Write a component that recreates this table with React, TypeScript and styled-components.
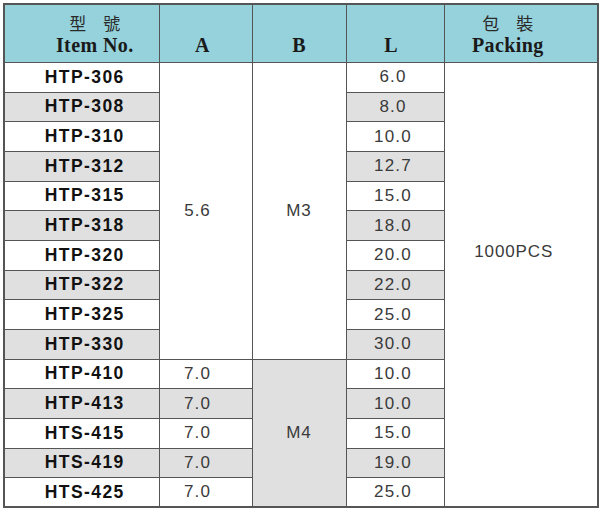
import React from "react";
import styled, { createGlobalStyle } from "styled-components";

const Global = createGlobalStyle`
  html, body { margin: 0; padding: 0; background: #ffffff; }
  body { width: 600px; height: 511px; overflow: hidden; }
`;

const Page = styled.div`
  padding: 3px 0 0 3px;
`;

const Table = styled.table`
  border-collapse: collapse;
  table-layout: fixed;
  width: 594px;
  border: 2px solid #555;
`;

const HeadCell = styled.th<{ $dx?: number }>`
  background: #95d2dc;
  height: 51px;
  padding: 0 ${(p) => (p.$dx && p.$dx < 0 ? -p.$dx * 2 : 0)}px 6px
    ${(p) => (p.$dx && p.$dx > 0 ? p.$dx * 2 : 0)}px;
  border: 1px solid #555;
  vertical-align: bottom;
  text-align: center;
  color: #1a1a1a;
`;

const Cjk = styled.div`
  font-family: "Noto Sans CJK TC", "Noto Sans CJK SC", sans-serif;
  font-size: 17px;
  font-weight: 400;
  line-height: 23px;
  color: #2a2a2a;
`;

const Latin = styled.div`
  font-family: "Liberation Serif", "Times New Roman", serif;
  font-size: 20px;
  font-weight: 700;
  line-height: 22px;
  letter-spacing: 0.4px;
`;

const Row = styled.tr`
  height: 29.67px;
`;

const ItemCell = styled.td<{ $shade?: boolean }>`
  background: ${(p) => (p.$shade ? "#e0e0e0" : "#ffffff")};
  border: 1px solid #555;
  border-top-color: ${(p) => (p.$shade ? "#9a9a9a" : "#555")};
  padding: 0 0 0 6px;
  text-align: center;
  font-family: "Liberation Sans", Arial, sans-serif;
  font-weight: 700;
  font-size: 17.5px;
  letter-spacing: 1.4px;
  color: #111;
`;

const ValueCell = styled.td<{ $shade?: boolean; $shift?: number }>`
  background: ${(p) => (p.$shade ? "#e0e0e0" : "#ffffff")};
  border: 1px solid #555;
  border-top-color: ${(p) => (p.$shade ? "#9a9a9a" : "#555")};
  padding: 0 ${(p) => (p.$shift ? p.$shift * 2 : 0)}px 0 0;
  text-align: center;
  font-family: "Liberation Sans", Arial, sans-serif;
  font-weight: 400;
  font-size: 17px;
  letter-spacing: 1.2px;
  color: #3a3a3a;
`;

const SpanCell = styled.td<{ $shade?: boolean; $lift?: number; $shift?: number }>`
  background: ${(p) => (p.$shade ? "#e0e0e0" : "#ffffff")};
  border: 1px solid #555;
  padding: 0 ${(p) => (p.$shift ? p.$shift * 2 : 0)}px ${(p) => (p.$lift ? p.$lift * 2 : 0)}px 0;
  text-align: center;
  vertical-align: middle;
  font-family: "Liberation Sans", Arial, sans-serif;
  font-weight: 400;
  font-size: 17px;
  letter-spacing: 0.9px;
  color: #3a3a3a;
`;

type R = { item: string; a?: string; l: string };

const rows: R[] = [
  { item: "HTP-306", l: "6.0" },
  { item: "HTP-308", l: "8.0" },
  { item: "HTP-310", l: "10.0" },
  { item: "HTP-312", l: "12.7" },
  { item: "HTP-315", l: "15.0" },
  { item: "HTP-318", l: "18.0" },
  { item: "HTP-320", l: "20.0" },
  { item: "HTP-322", l: "22.0" },
  { item: "HTP-325", l: "25.0" },
  { item: "HTP-330", l: "30.0" },
  { item: "HTP-410", a: "7.0", l: "10.0" },
  { item: "HTP-413", a: "7.0", l: "10.0" },
  { item: "HTS-415", a: "7.0", l: "15.0" },
  { item: "HTS-419", a: "7.0", l: "19.0" },
  { item: "HTS-425", a: "7.0", l: "25.0" },
];

export default function App() {
  return (
    <>
      <Global />
      <Page>
        <Table>
          <colgroup>
            <col style={{ width: 155 }} />
            <col style={{ width: 93 }} />
            <col style={{ width: 94 }} />
            <col style={{ width: 98 }} />
            <col style={{ width: 154 }} />
          </colgroup>
          <thead>
            <tr>
              <HeadCell $dx={13}>
                <Cjk>型　號</Cjk>
                <Latin>Item No.</Latin>
              </HeadCell>
              <HeadCell $dx={-3}>
                <Latin>A</Latin>
              </HeadCell>
              <HeadCell>
                <Latin>B</Latin>
              </HeadCell>
              <HeadCell $dx={-4}>
                <Latin>L</Latin>
              </HeadCell>
              <HeadCell $dx={-13}>
                <Cjk>包　裝</Cjk>
                <Latin>Packing</Latin>
              </HeadCell>
            </tr>
          </thead>
          <tbody>
            {rows.map((r, i) => {
              const shade = i % 2 === 1;
              return (
                <Row key={r.item + i}>
                  <ItemCell $shade={shade}>{r.item}</ItemCell>
                  {i === 0 && (
                    <>
                      <SpanCell rowSpan={10} $shift={8}>5.6</SpanCell>
                      <SpanCell rowSpan={10}>M3</SpanCell>
                    </>
                  )}
                  {i >= 10 && (
                    <ValueCell $shade={shade} $shift={8}>
                      {r.a}
                    </ValueCell>
                  )}
                  {i === 10 && (
                    <SpanCell rowSpan={5} $shade>
                      M4
                    </SpanCell>
                  )}
                  <ValueCell $shade={shade} $shift={2}>
                    {r.l}
                  </ValueCell>
                  {i === 0 && (
                    <SpanCell rowSpan={15} $lift={33} $shift={7}>
                      1000PCS
                    </SpanCell>
                  )}
                </Row>
              );
            })}
          </tbody>
        </Table>
      </Page>
    </>
  );
}
